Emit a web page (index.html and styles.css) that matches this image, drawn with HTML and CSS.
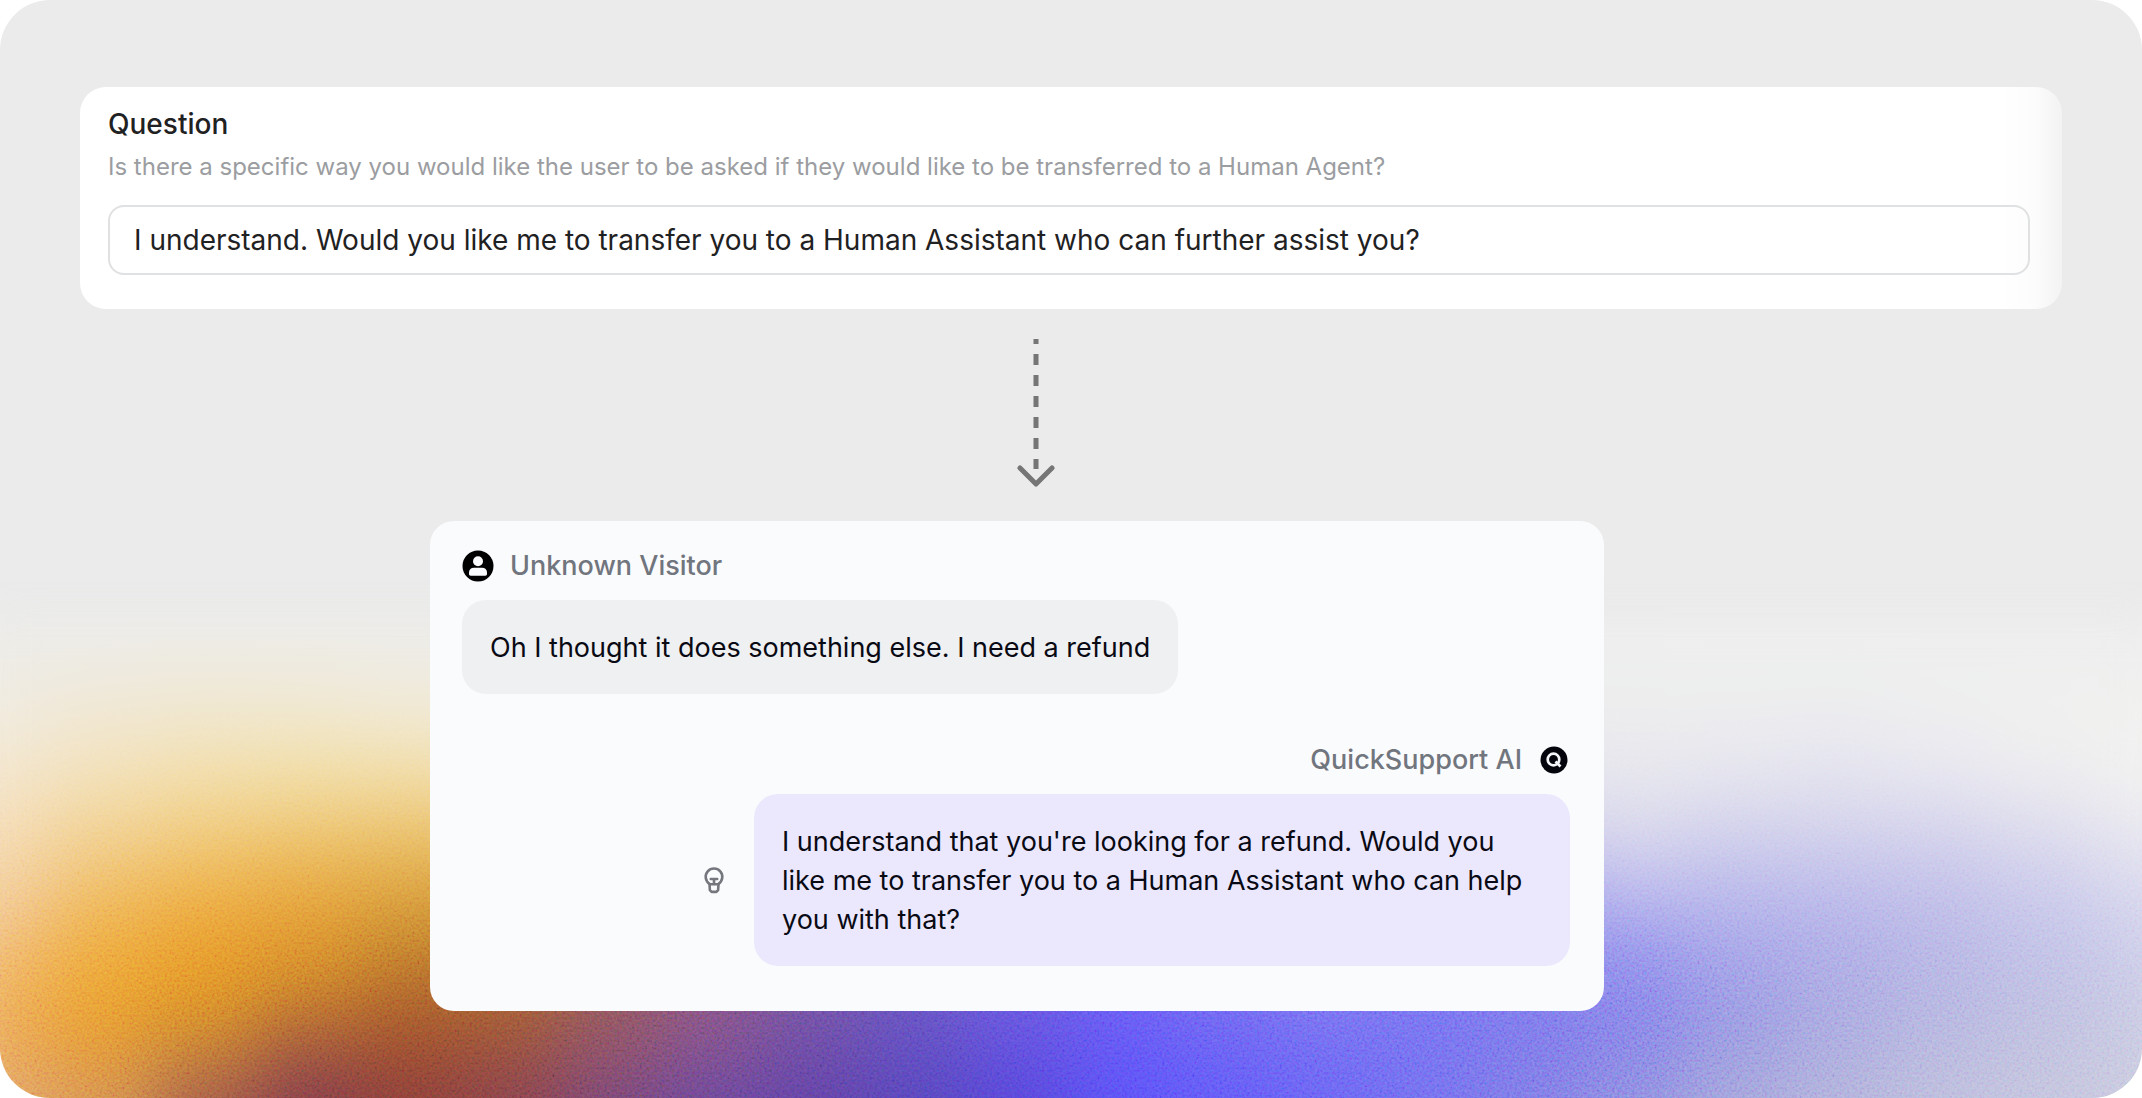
FILE: index.html
```html
<!DOCTYPE html>
<html lang="en">
<head>
  <meta charset="utf-8">
  <meta name="viewport" content="width=device-width, initial-scale=1">
  <title>Human handoff question</title>
  <link rel="stylesheet" href="styles.css">
</head>
<body>
  <main class="stage">
    <div class="backdrop" aria-hidden="true">
      <div class="glow">
        <i class="band band-1"></i><i class="band band-2"></i><i class="band band-3"></i><i class="band band-4"></i>
        <i class="band band-5"></i><i class="band band-6"></i><i class="band band-7"></i><i class="band band-8"></i>
        <i class="band band-9"></i><i class="band band-10"></i><i class="band band-11"></i><i class="band band-12"></i>
        <i class="band band-13"></i><i class="band band-14"></i><i class="band band-15"></i><i class="band band-16"></i>
        <i class="band band-17"></i><i class="band band-18"></i><i class="band band-19"></i><i class="band band-20"></i>
        <i class="band band-21"></i><i class="band band-22"></i>
      </div>
      <svg class="grain" width="100%" height="100%">
        <filter id="grain" x="0" y="0" width="100%" height="100%">
          <feTurbulence type="fractalNoise" baseFrequency="0.4" numOctaves="2" seed="4"/>
          <feColorMatrix values="1.6 0 0 0 -0.3  0 1.6 0 0 -0.3  0 0 1.6 0 -0.3  0 0 0 0 1"/>
        </filter>
        <rect width="100%" height="100%" filter="url(#grain)"/>
      </svg>
    </div>

    <section class="question">
      <label class="question-title" for="handoff">Question</label>
      <p class="question-help" id="handoff-help">Is there a specific way you would like the user to be asked if they would like to be transferred to a Human Agent?</p>
      <input class="question-input" id="handoff" type="text" aria-describedby="handoff-help" value="I understand. Would you like me to transfer you to a Human Assistant who can further assist you?">
    </section>

    <div class="flow">
      <svg class="arrow" width="40" height="150" viewBox="0 0 40 150" fill="none" stroke="#757575" stroke-width="5" aria-hidden="true">
        <path d="M20 2v5M20 17v115" stroke-dasharray="11 10"/>
        <path d="M4 131l16 16 16-16" stroke-linecap="round" stroke-linejoin="round"/>
      </svg>

      <section class="chat">
        <header class="sender">
          <svg width="32" height="32" viewBox="0 0 32 32" aria-hidden="true">
            <circle cx="16" cy="16" r="15.500" fill="#000"/>
            <circle cx="16" cy="11.200" r="5" fill="#fafbfd"/>
            <path d="M7 24v-1.500c0-3 2-4.800 5-4.800h8c3 0 5 1.800 5 4.800V24c0 1-.7 1.700-1.700 1.700H8.700C7.700 25.700 7 25 7 24z" fill="#fafbfd"/>
          </svg>
          <span>Unknown Visitor</span>
        </header>
        <p class="bubble bubble-visitor">Oh I thought it does something else. I need a refund</p>

        <header class="sender sender-agent">
          <span>QuickSupport AI</span>
          <svg width="28" height="28" viewBox="0 0 28 28" fill="none" stroke="#f4f5f8" aria-hidden="true">
            <circle cx="14" cy="14" r="13.500" fill="#04040c" stroke="none"/>
            <circle cx="13.500" cy="13.500" r="5.800" stroke-width="2.700"/>
            <path d="M15.500 15.500l5 5" stroke-width="2.700"/>
          </svg>
        </header>
        <div class="reply">
          <svg width="22" height="28" viewBox="0 0 22 28" fill="none" stroke="#74777d" stroke-width="2.600" stroke-linejoin="round" stroke-linecap="round" aria-hidden="true">
            <path d="M6.500 17.800A8.300 8.300 0 1 1 15.500 17.800"/>
            <path d="M6.500 18.300h9l-.4 5.800-1.700 1.800H8.600l-1.700-1.800z"/>
            <path d="M7.800 13h6.400M11 13v5"/>
          </svg>
          <p class="bubble bubble-agent">I understand that you're looking for a refund. Would you like me to transfer you to a Human Assistant who can help you with that?</p>
        </div>
      </section>
    </div>
  </main>
</body>
</html>
```
FILE: styles.css
```css
*, *::before, *::after { box-sizing: border-box; }

body {
  margin: 0;
  background: #fff;
  color: #1f2122;
  font-family: Inter, "Liberation Sans", sans-serif;
}

p { margin: 0; }

.stage {
  position: relative;
  min-height: 100vh;
  padding: 87px 80px;
  overflow: hidden;
  border-radius: 50px;
  background: #ebebeb;
}

/* Warm-to-violet glow along the lower half */
.backdrop {
  position: absolute;
  inset: 580px 0 0;
  overflow: hidden;
  -webkit-mask-image: linear-gradient(transparent, #000 60px);
  mask-image: linear-gradient(transparent, #000 60px);
}

.glow {
  display: flex;
  position: absolute;
  inset: 0 -50px;
  filter: blur(34px);
}

.band {
  flex: 1;
  margin-bottom: -100px;
  background: linear-gradient(#ebebeb, var(--a) 70px, var(--b) 120px, var(--c) 170px, var(--d) 220px, var(--e) 270px, var(--f) 320px, var(--g) 370px, var(--h) 420px, var(--i) 470px, var(--j) 530px);
}

.band-1 { --a: #edece8; --b: #f0ebe0; --c: #f2e8d4; --d: #f4e0bf; --e: #f4d6a8; --f: #f2c890; --g: #f0b468; --h: #eda64e; --i: #e89e50; --j: #e0a068; }
.band-2 { --a: #edece8; --b: #f0e9d8; --c: #f2e4c4; --d: #f3dba8; --e: #f0c97e; --f: #efb558; --g: #eda43a; --h: #ea9a2a; --i: #e29034; --j: #d08850; }
.band-3 { --a: #edece6; --b: #f0e8d4; --c: #f2e3bb; --d: #f2d695; --e: #efc268; --f: #eda840; --g: #e8962a; --h: #e08a20; --i: #c07834; --j: #985048; }
.band-4 { --a: #edece6; --b: #f0e9d6; --c: #f2e3b8; --d: #f1d58e; --e: #ebb95a; --f: #e6a03a; --g: #dc8a28; --h: #c47426; --i: #96503c; --j: #743448; }
.band-5 { --a: #eeece8; --b: #f1ebdc; --c: #f2e4bc; --d: #f0d28a; --e: #e8b656; --f: #da9a38; --g: #c07828; --h: #a85c28; --i: #94482c; --j: #803838; }
.band-6 { --a: #eeece8; --b: #f1ebdc; --c: #f2e4bc; --d: #f0d28a; --e: #e8b656; --f: #d09038; --g: #b06828; --h: #a05a30; --i: #904a3a; --j: #7c3c4a; }
.band-7 { --a: #eee; --b: #eee; --c: #ddd; --d: #c0a0a0; --e: #a07070; --f: #985860; --g: #905850; --h: #8c5458; --i: #844c62; --j: #6e4074; }
.band-8 { --a: #eee; --b: #eee; --c: #ddd; --d: #b0a0b0; --e: #907090; --f: #8c5880; --g: #845080; --h: #80507c; --i: #784c84; --j: #604098; }
.band-9 { --a: #eee; --b: #eee; --c: #ddd; --d: #a8a0c0; --e: #8070a0; --f: #7458a0; --g: #7052a0; --h: #6c50a0; --i: #6446a0; --j: #5a3ca0; }
.band-10 { --a: #eee; --b: #eee; --c: #ddd; --d: #a8a0d0; --e: #8070c0; --f: #7058c0; --g: #6652c0; --h: #6250c0; --i: #5a48bc; --j: #5040b8; }
.band-11 { --a: #eee; --b: #eee; --c: #ddd; --d: #a8a0d8; --e: #8478d8; --f: #7060e0; --g: #6656e0; --h: #6454e0; --i: #5a4adc; --j: #5040d8; }
.band-12 { --a: #eee; --b: #eee; --c: #dde; --d: #a8a0e0; --e: #8880f0; --f: #7468f4; --g: #6c60f4; --h: #6458f4; --i: #5c50f6; --j: #544cf8; }
.band-13 { --a: #eee; --b: #eee; --c: #dde; --d: #b0a8e8; --e: #908cf0; --f: #8078f0; --g: #746cf0; --h: #6c64f0; --i: #625af4; --j: #5c54f8; }
.band-14 { --a: #eee; --b: #eee; --c: #dde; --d: #b8b0e8; --e: #9894f0; --f: #8880f0; --g: #7c76f0; --h: #746ef0; --i: #6a64f2; --j: #625cf4; }
.band-15 { --a: #eee; --b: #eee; --c: #e6e6ee; --d: #c8c4ec; --e: #b0aeee; --f: #9490f0; --g: #7a74f0; --h: #706cf0; --i: #6e6af0; --j: #6c68ee; }
.band-16 { --a: #eee; --b: #eee; --c: #e8e8ee; --d: #dcdaec; --e: #c4c0ec; --f: #a09cec; --g: #807aec; --h: #7470ec; --i: #7672e8; --j: #7874e4; }
.band-17 { --a: #eeefee; --b: #eee; --c: #eaeaee; --d: #e2e2ec; --e: #d0ceec; --f: #b4b2ec; --g: #8e8cea; --h: #7c78ea; --i: #7e7ce4; --j: #8886de; }
.band-18 { --a: #eeefee; --b: #eee; --c: #eaeaf0; --d: #dedded; --e: #c8c7ea; --f: #b4b3ea; --g: #a09ee8; --h: #9190e2; --i: #9494de; --j: #a0a0d8; }
.band-19 { --a: #eeefee; --b: #eee; --c: #e8e8f0; --d: #dcdbec; --e: #cac9ea; --f: #b6b4ea; --g: #a8a6e4; --h: #a3a2e0; --i: #a4a4dc; --j: #aeaed8; }
.band-20 { --a: #eeefee; --b: #efefef; --c: #ececf1; --d: #dfdeee; --e: #cccaea; --f: #bcbae8; --g: #b2b0e4; --h: #aeaedf; --i: #b2b2dd; --j: #babada; }
.band-21 { --a: #eeefee; --b: #f0f0ef; --c: #f0f0f0; --d: #e6e5ee; --e: #d5d4ec; --f: #c6c5ea; --g: #bcbce6; --h: #b9b9e0; --i: #bcbcdc; --j: #c0c0dc; }
.band-22 { --a: #eeefee; --b: #f0f0ef; --c: #f2f2f0; --d: #eeeeef; --e: #e2e1ef; --f: #d2d2ec; --g: #c8c8e8; --h: #c3c4e2; --i: #c4c5de; --j: #c6c6de; }

.grain {
  position: absolute;
  inset: 0;
  opacity: 0.26;
  mix-blend-mode: overlay;
  -webkit-mask-image: linear-gradient(transparent 60px, #000 400px);
  mask-image: linear-gradient(transparent 60px, #000 400px);
}

/* Settings card */
.question {
  position: relative;
  display: flex;
  flex-direction: column;
  padding: 20px 32px 34px 28px;
  border-radius: 26px;
  background: linear-gradient(to left, #f3f3f3, #fcfcfc 28px, #fff 60px);
}

.question-title {
  font-size: 28px;
  font-weight: 500;
  line-height: 34px;
}

.question-help {
  margin: 11px 0 23px;
  color: #9b9da1;
  font-size: 24px;
  line-height: 30px;
}

.question-input {
  width: 100%;
  height: 70px;
  padding: 0 24px;
  border: 2px solid #dfe1e2;
  border-radius: 16px;
  background: transparent;
  color: inherit;
  font: inherit;
  font-size: 28px;
}

.flow {
  position: relative;
  display: grid;
  grid-template-columns: 350fr 1174fr 458fr;
}

.arrow {
  grid-column: 2;
  justify-self: center;
  margin: 28px 0 34px 38px;
}

/* Conversation card */
.chat {
  grid-column: 2;
  display: flex;
  flex-direction: column;
  padding: 29px 34px 45px 32px;
  border-radius: 24px;
  background: #fafbfd;
}

.sender {
  display: flex;
  align-items: center;
  gap: 16px;
  color: #71757e;
  font-size: 27px;
  font-weight: 500;
  line-height: 32px;
}

.sender-agent {
  align-self: flex-end;
  gap: 18px;
  margin-top: 50px;
  padding-right: 2px;
}

.bubble {
  padding: 28px 28px 27px;
  border-radius: 24px;
  color: #0a0a14;
  font-size: 27px;
  line-height: 39px;
}

.bubble-visitor {
  align-self: flex-start;
  margin-top: 18px;
  background: #eff0f2;
}

.reply {
  display: flex;
  align-items: center;
  justify-content: flex-end;
  gap: 29px;
  margin-top: 18px;
}

.bubble-agent {
  flex: 0 1 816px;
  background: #ebe8fe;
}
```
